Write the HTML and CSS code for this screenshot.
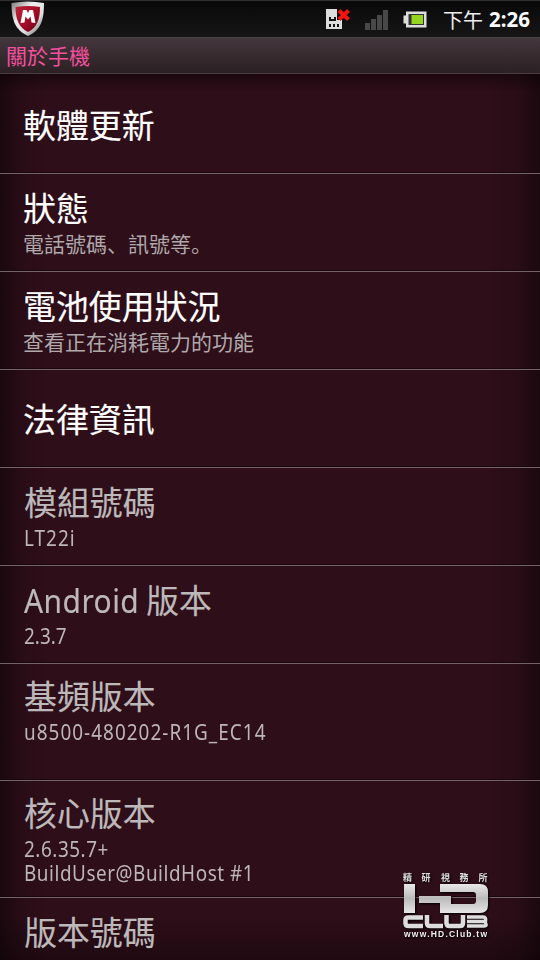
FILE: index.html
```html
<!DOCTYPE html>
<html lang="zh-Hant">
<head>
<meta charset="utf-8">
<title>關於手機</title>
<link rel="stylesheet" href="styles.css">
</head>
<body>
<div class="phone">
  <header class="status">
    <svg class="shield" width="34" height="36" viewBox="0 0 34 36">
      <defs>
        <linearGradient id="rim" x1="0" y1="0" x2="1" y2="1"><stop offset="0" stop-color="#777"/><stop offset=".35" stop-color="#eee"/><stop offset=".65" stop-color="#ddd"/><stop offset="1" stop-color="#555"/></linearGradient>
        <linearGradient id="red" x1="0" y1="0" x2="1" y2="1"><stop offset="0" stop-color="#b92639"/><stop offset=".5" stop-color="#a80c27"/><stop offset="1" stop-color="#650013"/></linearGradient>
      </defs>
      <path d="M.5 2Q17-1 33 2C33 19 30 29 17 35C4 29 .5 19 .5 2Z" fill="url(#rim)"/>
      <path d="M4.500 6Q17 4 29 6C29 18 26 27 17 31C8 27 4.500 18 4.500 6Z" fill="url(#red)"/>
      <path d="M9.500 22L12 9L15.500 9L17 12L18.500 9L22 9L24.500 22L20.500 21.500L19.500 15.500L17 18.500L14.500 15.500L13.500 21.500Z" fill="#fff"/>
    </svg>
    <div class="status-right">
      <svg class="sim" width="26" height="22" viewBox="0 0 26 22">
        <path d="M1 1H12V12H17V21H1Z" fill="#ddd"/>
        <path d="M4 9H6V11H9V9H11V13H4ZM4 16H6V19H4ZM8 16H10V19H8ZM12 16H14V19H12Z" fill="#111"/>
        <path d="M14 2.500L23.500 11.500M23.500 2.500L14 11.500" stroke="#f51313" stroke-width="4"/>
      </svg>
      <svg class="signal" width="24" height="20" viewBox="0 0 24 20"><path d="M0 13H5V20H0ZM6 9H11V20H6ZM12 5H17V20H12ZM18 0H23V20H18Z" fill="#484848"/></svg>
      <svg class="battery" width="24" height="17" viewBox="0 0 24 17"><path d="M3 .5H23.500V16.500H3V12.500H.5V4.500H3Z" fill="#ddd"/><path d="M5.500 3H21V14H5.500Z" fill="#333"/><path d="M8.500 4H20V13H8.500Z" fill="#95d51e"/></svg>
      <span class="period">下午</span><b class="clock">2:26</b>
    </div>
  </header>
  <h1 class="title">關於手機</h1>
  <main class="list">
    <section class="row"><h2>軟體更新</h2></section>
    <section class="row"><h2>狀態</h2><p>電話號碼<span class="punct" lang="ja">、</span>訊號等<span class="punct" lang="ja">。</span></p></section>
    <section class="row"><h2>電池使用狀況</h2><p>查看正在消耗電力的功能</p></section>
    <section class="row"><h2>法律資訊</h2></section>
    <section class="row info"><h2>模組號碼</h2><p class="latin spaced">LT22i</p></section>
    <section class="row info"><h2><span class="android">Android</span>版本</h2><p class="latin">2.3.7</p></section>
    <section class="row info tall"><h2>基頻版本</h2><p class="latin spaced">u8500-480202-R1G_EC14</p></section>
    <section class="row info tall"><h2>核心版本</h2><p class="latin kernel">2.6.35.7+<br>BuildUser@BuildHost #1</p></section>
    <section class="row info last"><h2>版本號碼</h2></section>
  </main>
  <svg class="watermark" width="92" height="70" viewBox="0 0 92 70">
    <defs><linearGradient id="silver" x1="0" y1="0" x2="0" y2="1"><stop offset="0" stop-color="#e8e8e8"/><stop offset=".5" stop-color="#bbb"/><stop offset="1" stop-color="#e6e6e6"/></linearGradient></defs>
    <g class="wm-cjk"><text x="3" y="11">精</text><text x="21.500" y="11">研</text><text x="41" y="11">視</text><text x="59.500" y="11">務</text><text x="78.500" y="11">所</text></g>
    <path d="M4 14H15V43H4ZM40 14H80Q88 14 88 22V35Q88 43 80 43H40V33H19V26H51V34H73Q76 34 76 31V25Q76 22 73 22H40Z" fill="url(#silver)"/>
    <g fill="none" stroke="#ddd" stroke-width="4.500"><path d="M23 47.500H8.500Q5.500 47.500 5.500 50V53Q5.500 56 8.500 56H23M27 45V53Q27 56 30 56H43M46.500 45V53Q46.500 56 49.500 56H60Q63 56 63 53V45"/><path d="M67 47H83Q86.500 47 85.500 51.500H67M84.500 51.500Q88 56 84 56H67" stroke-width="3.500"/></g>
    <text class="wm-url" x="4" y="67" textLength="83" lengthAdjust="spacing">www.HD.Club.tw</text>
  </svg>
</div>
</body>
</html>
```
FILE: styles.css
```css
* { box-sizing: border-box; }
body { margin: 0; background: #000; font-family: "Noto Sans", "Noto Sans CJK TC", sans-serif; }
.phone { position: relative; width: 540px; height: 960px; overflow: hidden; display: flex; flex-direction: column; }
.status { height: 38px; flex: none; display: flex; justify-content: space-between; background: linear-gradient(#090909, #161616); border-top: 1px solid #303030; border-bottom: 1px solid #444; color: #eee; }
.shield { margin-left: 11px; }
.status-right { display: flex; align-items: flex-start; padding: 7px 8px 0 0; line-height: 24px; }
.signal { margin: 2px 0 0 14px; }
.battery { margin: 3px 0 0 14px; }
.period { font: 20px/24px "Noto Sans CJK TC", sans-serif; margin-left: 16px; }
.clock { width: 43px; margin-left: 6px; font-size: 20.500px; line-height: 23px; color: #fff; }
.title { flex: none; height: 36px; margin: 0; padding-left: 6px; font: 400 21px/35px "Noto Sans CJK TC", sans-serif; color: #f4509e; background: linear-gradient(#43363c, #2b2024); border-bottom: 1px solid #4b3b40; }
.list { height: 886px; flex: none; padding-top: 2px; background: linear-gradient(90deg, rgba(0,0,0,.42), rgba(0,0,0,.12) 4%, transparent 9%, transparent 90%, rgba(0,0,0,.12) 96%, rgba(0,0,0,.42)), linear-gradient(#1c080f, #2e0e19 2%, #2e0e19 95%, #1f0911); }
.row { height: 98px; padding: 15px 0 0 23px; border-bottom: 1px solid #736269; box-shadow: inset 0 -1px #19070d; color: #fff; display: flex; flex-direction: column; align-items: flex-start; }
.row h2 { margin: 0; font-size: 32.900px; font-weight: 400; line-height: 40px; white-space: nowrap; -webkit-text-stroke: .15px; }
.row p { margin: 3px 0 0; font-size: 21px; line-height: 24px; color: #afa9ab; white-space: nowrap; }
.row h2:only-child { margin-top: 15px; }
.punct { font-family: "Noto Sans CJK JP", sans-serif; line-height: 1; }
.info { padding-left: 24px; color: #bdb9ba; }
.row .latin { color: #bdb6b9; transform: scaleX(.9); transform-origin: 0 0; }
.row .spaced { letter-spacing: 1.150px; }
.row .kernel { letter-spacing: .6px; }
.tall { height: 117px; padding-top: 13px; }
.android { display: inline-block; width: 122px; transform: scaleX(.91); transform-origin: 0 0; letter-spacing: .5px; }
.last { height: 62px; border: 0; box-shadow: none; }
.last h2:only-child { margin-top: 0; }
.watermark { position: absolute; left: 400px; top: 870px; filter: drop-shadow(1px 1px 1px #000); }
.wm-cjk { font: 700 9px "Noto Sans CJK TC", sans-serif; fill: #ddd; }
.wm-url { font: 700 8.500px "Liberation Sans", sans-serif; fill: #eee; }
```
